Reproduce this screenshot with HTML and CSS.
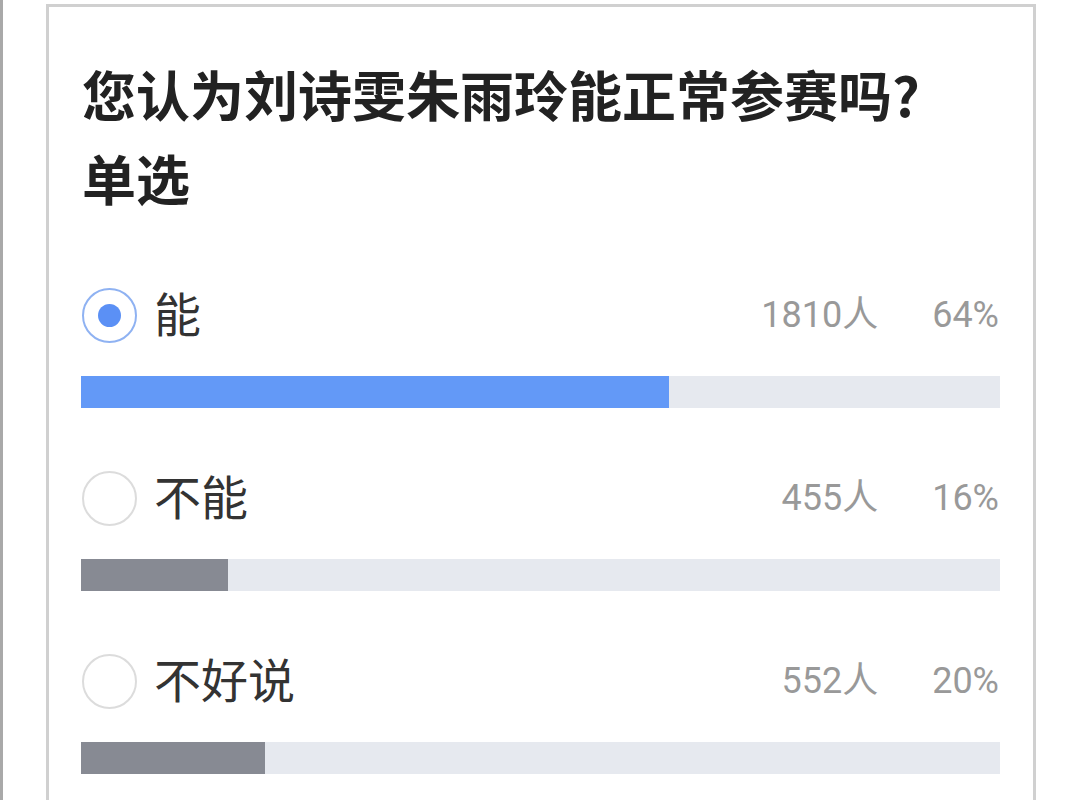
FILE: index.html
```html
<!DOCTYPE html>
<html lang="zh">
<head>
<meta charset="utf-8">
<title>投票</title>
<link rel="stylesheet" href="styles.css">
</head>
<body>
<div class="page">
  <div class="card">
    <div class="title">您认为刘诗雯朱雨玲能正常参赛吗?</div>
    <div class="title">单选</div>
    <div class="options">
      <div class="option">
        <div class="row">
          <span class="radio checked"><span class="dot"></span></span>
          <span class="label">能</span>
          <span class="count">1810人</span>
          <span class="pct">64%</span>
        </div>
        <div class="track"><div class="fill blue" style="width:64%"></div></div>
      </div>
      <div class="option">
        <div class="row">
          <span class="radio"></span>
          <span class="label">不能</span>
          <span class="count">455人</span>
          <span class="pct">16%</span>
        </div>
        <div class="track"><div class="fill gray" style="width:16%"></div></div>
      </div>
      <div class="option last">
        <div class="row">
          <span class="radio"></span>
          <span class="label">不好说</span>
          <span class="count">552人</span>
          <span class="pct">20%</span>
        </div>
        <div class="track"><div class="fill gray" style="width:20%"></div></div>
      </div>
    </div>
  </div>
</div>
</body>
</html>
```
FILE: styles.css
```css
html, body {
  margin: 0;
  padding: 0;
  background: #ffffff;
  overflow: hidden;
}
body {
  font-family: "Noto Sans CJK SC", "Noto Sans", sans-serif;
  color: #333333;
}
.page {
  border-left: 3px solid #a9a9a9;
  height: 800px;
  padding-top: 4px;
  box-sizing: border-box;
  display: flex;
  flex-direction: column;
}
.card {
  margin-left: 43px;
  width: 990px;
  flex: 1;
  box-sizing: border-box;
  border: 3px solid #d0d0d0;
  border-bottom: 0;
  padding: 45px 33px 0 32px;
  background: #fff;
}
.title {
  font-size: 54px;
  line-height: 84px;
  font-weight: 700;
  color: #222222;
  margin-left: 1px;
}
.options {
  margin-top: 68px;
}
.option {
  margin-bottom: 63px;
}
.option.last {
  margin-bottom: 0;
}
.row {
  display: flex;
  align-items: center;
  height: 54px;
  margin-bottom: 34px;
}
.radio {
  width: 55px;
  height: 55px;
  box-sizing: border-box;
  border-radius: 50%;
  border: 2px solid #dcdcdc;
  display: flex;
  align-items: center;
  justify-content: center;
  flex-shrink: 0;
  margin-left: 1px;
}
.radio.checked {
  border-color: #8fb2f2;
}
.dot {
  width: 23px;
  height: 23px;
  border-radius: 50%;
  background: #5b90f5;
}
.label {
  font-size: 47px;
  line-height: 54px;
  color: #333333;
  margin-left: 17px;
  padding-bottom: 6px;
  flex: 1;
}
.count, .pct {
  font-family: Roboto, "Noto Sans CJK SC", sans-serif;
  font-size: 36px;
  color: #999999;
  line-height: 54px;
}
.pct {
  margin-left: 54px;
  margin-right: 1px;
}
.track {
  height: 32px;
  background: #e6e9ef;
}
.fill {
  height: 100%;
}
.fill.blue {
  background: #6399f7;
}
.fill.gray {
  background: #878a93;
}
```
